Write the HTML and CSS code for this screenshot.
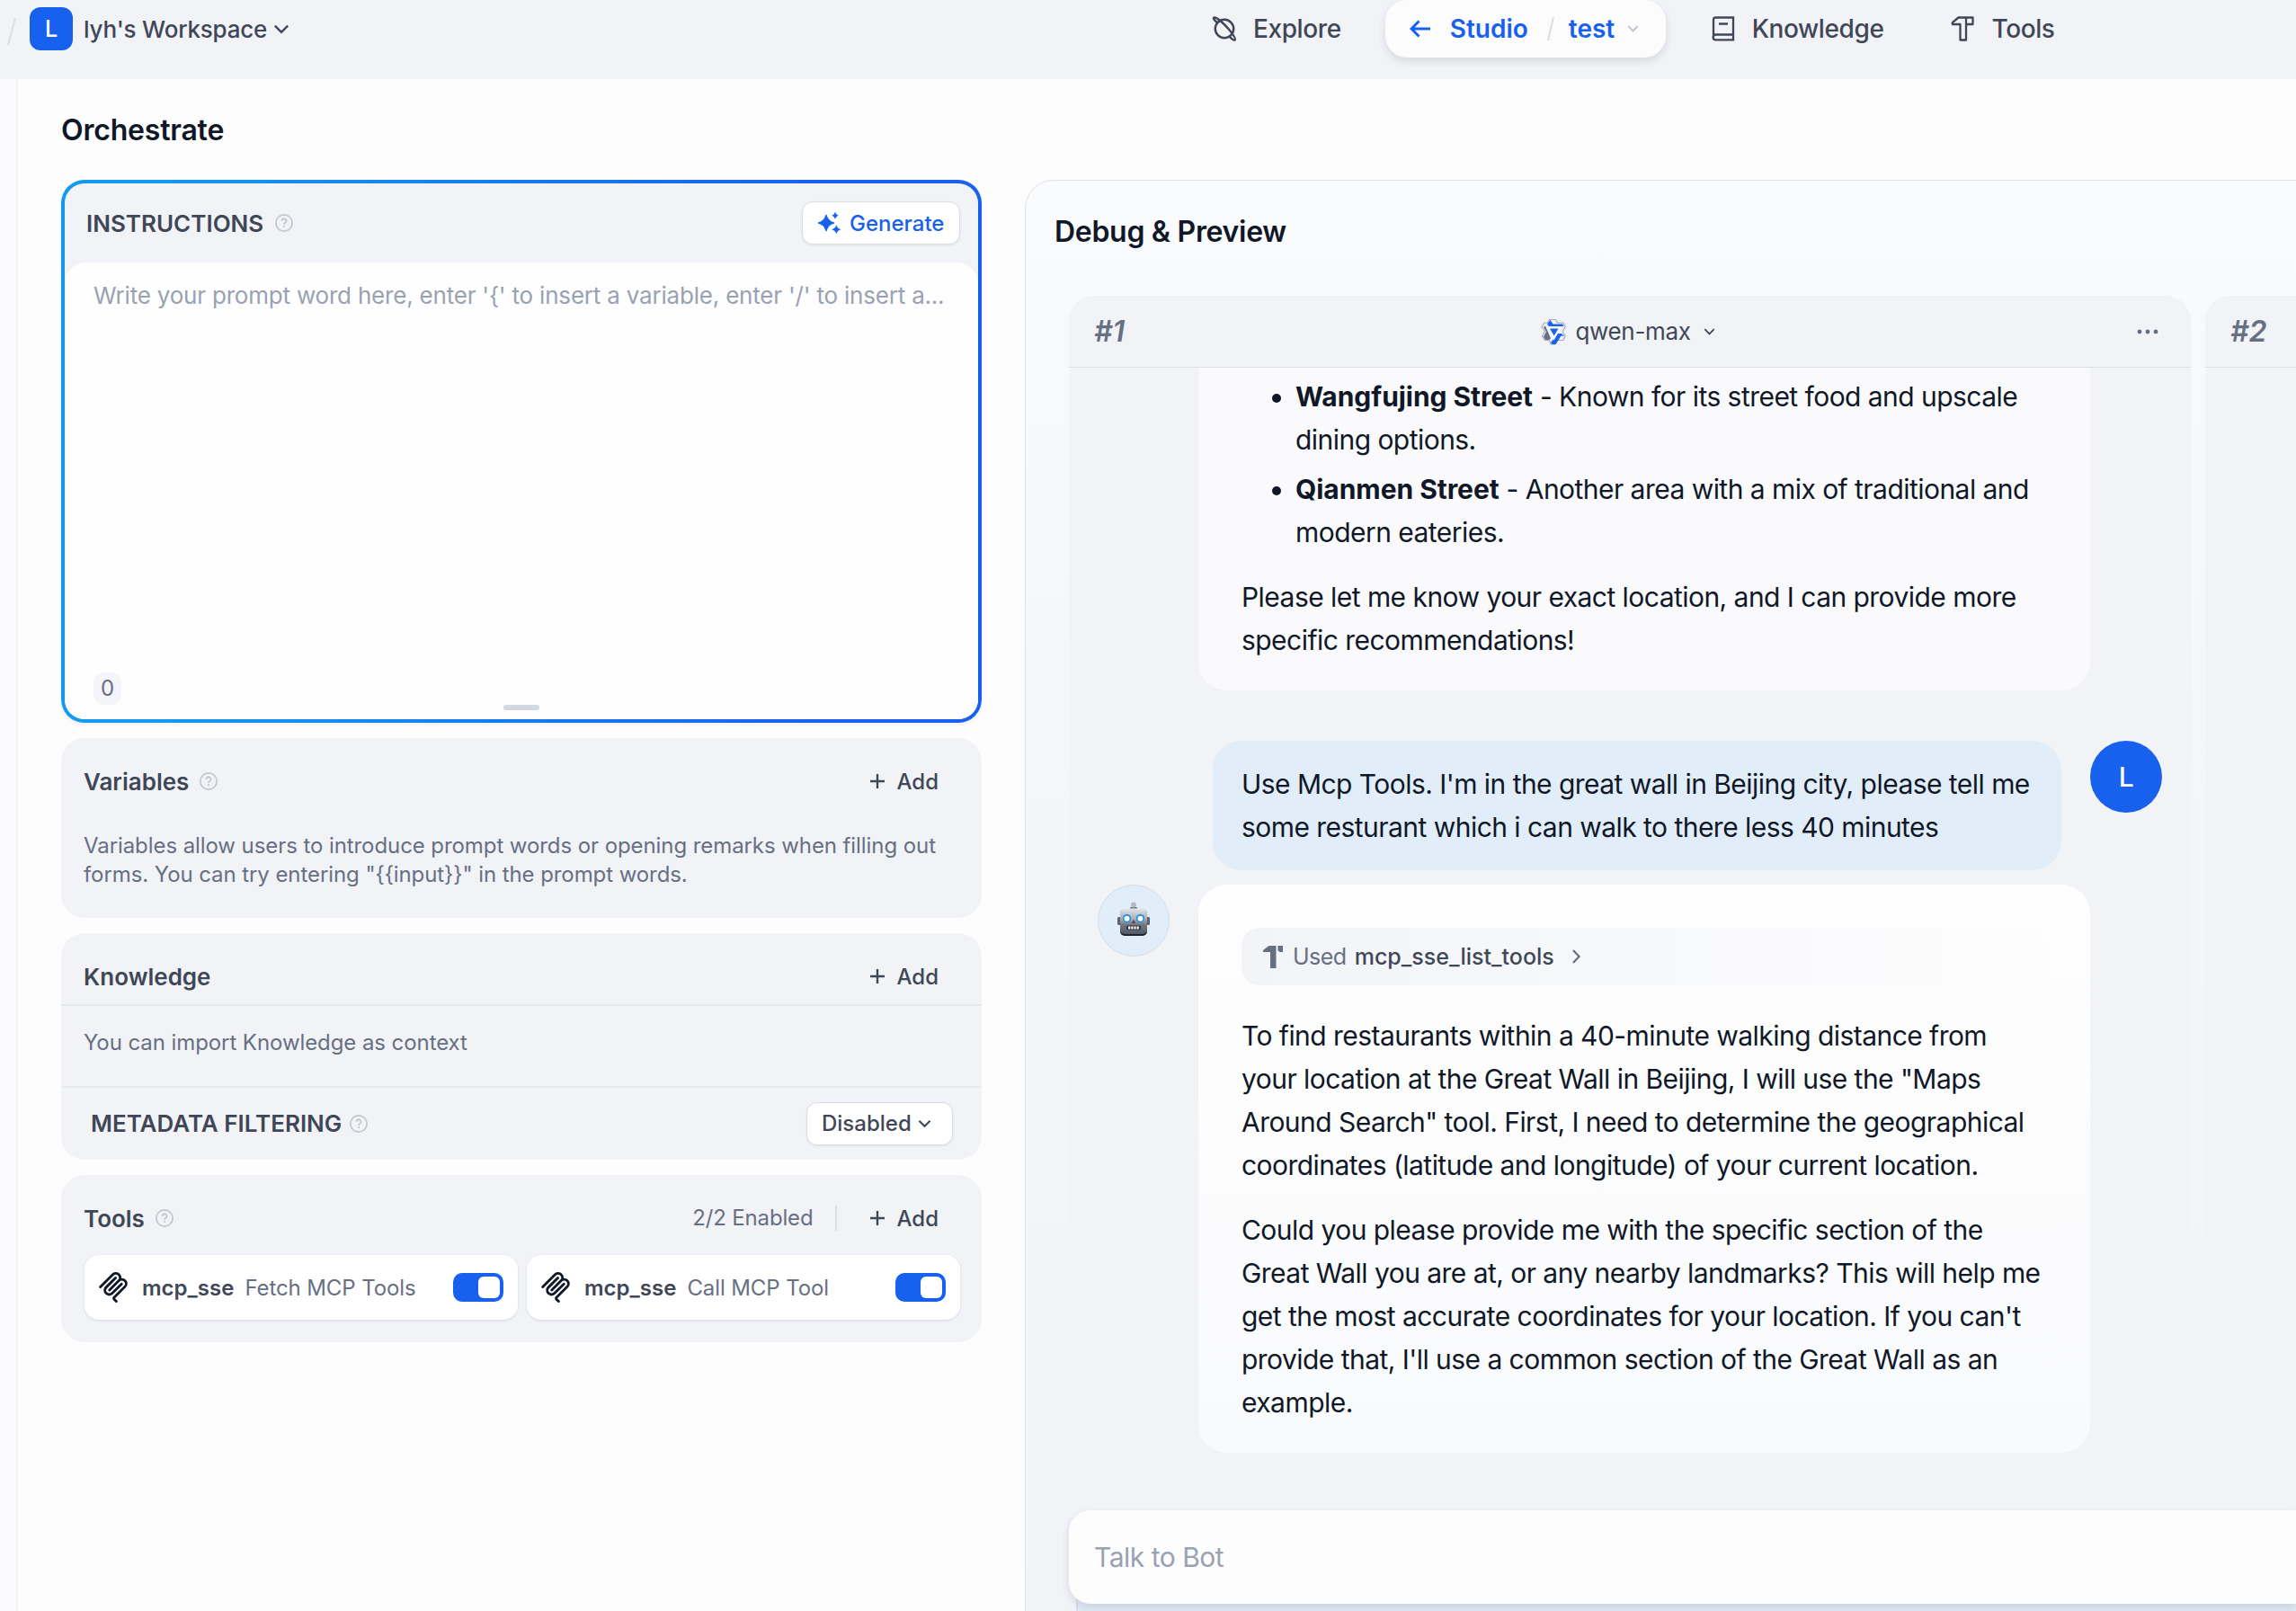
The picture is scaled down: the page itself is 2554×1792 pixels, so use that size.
FILE: index.html
```html
<!DOCTYPE html>
<html lang="en">
<head>
    <meta charset="UTF-8">
    <meta name="viewport" content="width=device-width, initial-scale=1.0">
    <title>Orchestrate</title>
    <link rel="stylesheet" href="styles.css">
</head>
<body>
    <!-- shared icons -->
    <svg class="sprite" width="0" height="0">
        <symbol id="help" viewBox="0 0 24 24">
            <circle cx="12" cy="12" r="11" fill="none" stroke="currentColor" stroke-width="2"/>
            <path d="M9 9.4a3 3 0 1 1 4.300 2.700c-.9.45-1.300.9-1.300 1.900" fill="none" stroke="currentColor" stroke-width="2"/>
            <rect x="10.900" y="15.500" width="2.200" height="2.200" fill="currentColor"/>
        </symbol>
        <symbol id="chevron" viewBox="0 0 16 10">
            <path d="M1.500 1.500L8 8l6.500-6.500" fill="none" stroke="currentColor" stroke-width="2.200"/>
        </symbol>
        <symbol id="plus" viewBox="0 0 16 16">
            <path d="M8 0v16M0 8h16" stroke="currentColor" stroke-width="2.400"/>
        </symbol>
        <symbol id="mcp" viewBox="2.500 2 19 20">
            <path d="M3.500 11.750L11.672 3.579C12.776 2.474 14.567 2.474 15.672 3.579C16.776 4.683 16.776 6.474 15.672 7.579M15.672 7.579L9.500 13.750M15.672 7.579C16.776 6.474 18.567 6.474 19.672 7.579C20.776 8.683 20.776 10.474 19.672 11.579L12.707 18.543C12.317 18.934 12.317 19.567 12.707 19.957L14 21.250" fill="none" stroke="currentColor" stroke-width="1.700" stroke-linecap="round"/>
            <path d="M17.500 9.749L11.328 15.921C10.224 17.026 8.433 17.026 7.328 15.921C6.224 14.816 6.224 13.026 7.328 11.921L13.500 5.749" fill="none" stroke="currentColor" stroke-width="1.700" stroke-linecap="round"/>
        </symbol>
    </svg>

    <header class="header">
        <div class="workspace">
            <svg class="slash" viewBox="0 0 10 30"><path d="M9 0L1 30" stroke="#d9dde4" stroke-width="2"/></svg>
            <div class="ws-logo">L</div>
            <span class="ws-name">lyh's Workspace</span>
            <svg class="ws-arrow"><use href="#chevron"/></svg>
        </div>
        <nav class="nav">
            <a class="nav-item explore">
                <svg class="nav-icon" viewBox="0 0 26 26" fill="none" stroke="currentColor" stroke-width="2.300">
                    <circle cx="13" cy="13" r="9.500"/>
                    <path d="M5.500 6.500C2 3.500 1 2 2.500 1.400C5 1 12 7 17.500 13.500C22 19 25 23.500 23.800 24.500C22.800 25.200 20.500 23.500 18 21"/>
                </svg>
                <span>Explore</span>
            </a>
            <div class="nav-active">
                <svg class="nav-back" viewBox="0 0 24 20"><path d="M23 10H2M10.500 1.500L2 10l8.500 8.500" fill="none" stroke="currentColor" stroke-width="3"/></svg>
                <span class="studio">Studio</span>
                <svg class="nav-slash" viewBox="0 0 8 26"><path d="M7 0L1 26" stroke="#d9dde4" stroke-width="2"/></svg>
                <span class="app-name">test</span>
                <svg class="nav-arrow"><use href="#chevron"/></svg>
            </div>
            <a class="nav-item knowledge">
                <svg class="nav-icon" viewBox="0 0 26 28" fill="none" stroke="currentColor" stroke-width="2.300">
                    <path d="M24 20.500H4.500a2.900 2.900 0 0 0 0 5.800H24V1.500H4.500A2.500 2.500 0 0 0 2 4v19.500M8 8.500h10"/>
                </svg>
                <span>Knowledge</span>
            </a>
            <a class="nav-item tools">
                <svg class="nav-icon" viewBox="0 0 26 28" fill="none" stroke="currentColor" stroke-width="2.300" stroke-linejoin="round">
                    <path d="M8.500 1.500H24.500V9H17V26.500H10.500V9H1.800V7.200zM17 1.500V9"/>
                </svg>
                <span>Tools</span>
            </a>
        </nav>
    </header>

    <div class="main">
        <div class="side-strip"></div>
        <section class="config">
            <h1 class="page-title">Orchestrate</h1>

            <div class="prompt">
                <div class="prompt-inner">
                    <div class="prompt-head">
                        <b>INSTRUCTIONS</b>
                        <svg class="help"><use href="#help"/></svg>
                        <button type="button" class="btn generate">
                            <svg class="sparkle" viewBox="0 0 26 26" fill="currentColor">
                                <path d="M9 4.500Q10.500 11.500 17.500 13Q10.500 14.500 9 21.500Q7.500 14.500 .5 13Q7.500 11.500 9 4.500z" stroke="currentColor" stroke-width="1.500" stroke-linejoin="round"/>
                                <path d="M19 .5Q19.800 4 23 4.800Q19.800 5.600 19 9Q18.200 5.600 15 4.800Q18.200 4 19 .5z"/>
                                <path d="M20.300 15Q21.300 19.200 25.500 20.200Q21.300 21.200 20.300 25.500Q19.300 21.200 15 20.200Q19.300 19.200 20.300 15z"/>
                            </svg>
                            <span>Generate</span>
                        </button>
                    </div>
                    <div class="prompt-body">
                        <div class="placeholder">Write your prompt word here, enter '{' to insert a variable, enter '/' to insert a...</div>
                        <div class="count">0</div>
                        <div class="handle"></div>
                    </div>
                </div>
            </div>

            <div class="card variables">
                <div class="card-head">
                    <b>Variables</b>
                    <svg class="help"><use href="#help"/></svg>
                    <span class="add"><svg><use href="#plus"/></svg>Add</span>
                </div>
                <p class="desc">Variables allow users to introduce prompt words or opening remarks when filling out<br>forms. You can try entering "{{input}}" in the prompt words.</p>
            </div>

            <div class="card knowledge-card">
                <div class="card-head">
                    <b>Knowledge</b>
                    <span class="add"><svg><use href="#plus"/></svg>Add</span>
                </div>
                <p class="desc">You can import Knowledge as context</p>
                <div class="metadata">
                    <b>METADATA FILTERING</b>
                    <svg class="help"><use href="#help"/></svg>
                    <button type="button" class="btn disabled">Disabled<svg><use href="#chevron"/></svg></button>
                </div>
            </div>

            <div class="card tools-card">
                <div class="card-head">
                    <b>Tools</b>
                    <svg class="help"><use href="#help"/></svg>
                    <span class="enabled">2/2 Enabled</span>
                    <span class="add"><svg><use href="#plus"/></svg>Add</span>
                </div>
                <div class="tool-list">
                    <div class="tool">
                        <svg class="mcp"><use href="#mcp"/></svg>
                        <b>mcp_sse</b>
                        <span class="tool-name">Fetch MCP Tools</span>
                        <i class="toggle"></i>
                    </div>
                    <div class="tool">
                        <svg class="mcp"><use href="#mcp"/></svg>
                        <b>mcp_sse</b>
                        <span class="tool-name">Call MCP Tool</span>
                        <i class="toggle"></i>
                    </div>
                </div>
            </div>
        </section>

        <section class="debug">
            <h2 class="debug-title">Debug &amp; Preview</h2>
            <div class="columns">
                <div class="column">
                    <div class="col-head">
                        <i class="num">#1</i>
                        <div class="model">
                            <svg class="qwen" viewBox="0 0 28 30">
                                <path d="M9.500 1.500h7l2 3.500h6.500l2.200 4.500-3 5.500 3 5-2.500 4.500h-5.500l-3.500 4.500h-4.500l-2-4.500H4.500L1.500 20l3-5.500L1 9.500 4 5h3.500z" fill="#eef1f8" stroke="#a3aab8" stroke-width="1.200"/>
                                <path d="M10.500 2l3 4.500h10.500l1.500 2.500H9L7 6.500z" fill="#1c61ec"/>
                                <path d="M26 20l-3.500-.500L16.500 29H12.500l-1.500-2L19 17h4z" fill="#1c61ec"/>
                                <path d="M3 20.500L6 15 3 10l2-1.500 6 14-2 1.500H5z" fill="#667085"/>
                                <path d="M6 9h17.500L14.500 24.500z" fill="#f7f9fd"/>
                                <path d="M10 11.500h9.500L14.700 19.500z" fill="#1c61ec"/>
                            </svg>
                            <span>qwen-max</span>
                            <svg class="model-arrow"><use href="#chevron"/></svg>
                        </div>
                        <svg class="dots" viewBox="0 0 24 6" fill="#676f83"><circle cx="3" cy="3" r="2.400"/><circle cx="12" cy="3" r="2.400"/><circle cx="21" cy="3" r="2.400"/></svg>
                    </div>
                    <div class="chat">
                        <div class="answer first">
                            <ul>
                                <li><b>Wangfujing Street</b> - Known for its street food and upscale<br>dining options.</li>
                                <li><b>Qianmen Street</b> - Another area with a mix of traditional and<br>modern eateries.</li>
                            </ul>
                            <p>Please let me know your exact location, and I can provide more<br>specific recommendations!</p>
                        </div>
                        <div class="question-row">
                            <div class="question">Use Mcp Tools. I'm in the great wall in Beijing city, please tell me<br>some resturant which i can walk to there less 40 minutes</div>
                            <div class="avatar user">L</div>
                        </div>
                        <div class="answer-row">
                            <div class="avatar bot">
                                <svg class="robot" viewBox="0 0 36 38">
                                    <defs>
                                        <linearGradient id="metal" x1="0" y1="0" x2="0" y2="1">
                                            <stop offset="0" stop-color="#e4e6ea"/>
                                            <stop offset=".4" stop-color="#a9adb6"/>
                                            <stop offset=".65" stop-color="#70757f"/>
                                            <stop offset="1" stop-color="#555a66"/>
                                        </linearGradient>
                                    </defs>
                                    <rect x="14" y="6" width="8" height="3" rx="1" fill="#6f7480"/>
                                    <circle cx="18" cy="3.500" r="3" fill="#b4b8c0"/>
                                    <rect x="0" y="17" width="4" height="9" rx="1.500" fill="#5d6270"/>
                                    <rect x="32" y="17" width="4" height="9" rx="1.500" fill="#5d6270"/>
                                    <rect x="3" y="8" width="30" height="30" rx="5" fill="#1f2430"/>
                                    <rect x="3" y="7.500" width="30" height="28.500" rx="5" fill="url(#metal)"/>
                                    <circle cx="10.500" cy="18.500" r="4.600" fill="#1c8fea"/>
                                    <circle cx="25.500" cy="18.500" r="4.600" fill="#1c8fea"/>
                                    <circle cx="10.500" cy="18.800" r="3" fill="#fff"/>
                                    <circle cx="25.500" cy="18.800" r="3" fill="#fff"/>
                                    <path d="M18 20l2.500 4h-5z" fill="#474c59"/>
                                    <rect x="10" y="26.500" width="16" height="5" rx="1.500" fill="#333845"/>
                                    <path d="M12 29h12" stroke="#fff" stroke-width="3" stroke-dasharray="2.200 1"/>
                                </svg>
                            </div>
                            <div class="answer">
                                <div class="used-tool">
                                    <svg class="hammer" viewBox="0 0 22 25" fill="#676f83"><path d="M6.500 0H14.500V25H8V7H0V5z"/><path d="M16.500 0h5.500v7h-3l-2.500-1.500z"/></svg>
                                    <span class="used">Used</span>
                                    <span class="used-name">mcp_sse_list_tools</span>
                                    <svg class="right" viewBox="0 0 9 16"><path d="M1 1l6.500 7L1 15" fill="none" stroke="#676f83" stroke-width="2.200"/></svg>
                                </div>
                                <p>To find restaurants within a 40-minute walking distance from<br>your location at the Great Wall in Beijing, I will use the "Maps<br>Around Search" tool. First, I need to determine the geographical<br>coordinates (latitude and longitude) of your current location.</p>
                                <p>Could you please provide me with the specific section of the<br>Great Wall you are at, or any nearby landmarks? This will help me<br>get the most accurate coordinates for your location. If you can't<br>provide that, I'll use a common section of the Great Wall as an<br>example.</p>
                            </div>
                        </div>
                    </div>
                </div>
                <div class="column next">
                    <div class="col-head">
                        <i class="num">#2</i>
                    </div>
                </div>
            </div>
            <div class="talk">
                <div class="talk-input">Talk to Bot</div>
                <div class="talk-foot"></div>
            </div>
        </section>
    </div>
</body>
</html>
```
FILE: styles.css
```css
*{
    box-sizing: border-box;
}
body{
    margin: 0;
    width: 2554px;
    height: 1792px;
    overflow: hidden;
    background-color: #fdfdfe;
    font-family: Inter, "Liberation Sans", sans-serif;
    color: #101828;
}
body *{
    white-space: nowrap;
}
svg{
    display: block;
    flex: none;
}
h1, h2, p, ul{
    margin: 0;
    padding: 0;
}
.sprite{
    position: absolute;
}

/* header */
.header{
    display: flex;
    height: 88px;
    background-color: #f1f3f7;
    color: #3f4757;
    font-size: 28px;
    font-weight: 500;
}
.workspace{
    display: flex;
    align-items: center;
    width: 1348px;
    height: 64px;
    padding-left: 8px;
}
.slash{
    width: 10px;
    height: 30px;
    margin-top: 6px;
}
.ws-logo{
    width: 48px;
    height: 48px;
    margin-left: 15px;
    border-radius: 12px;
    background-color: #1860ee;
    color: white;
    font-size: 25px;
    line-height: 48px;
    text-align: center;
}
.ws-name{
    margin-left: 12px;
    font-size: 26px;
    letter-spacing: -0.2px;
}
.ws-arrow{
    width: 18px;
    height: 11px;
    margin-left: 7px;
}
.nav{
    display: flex;
    height: 64px;
}
.nav-item{
    display: flex;
    align-items: center;
    letter-spacing: -0.4px;
}
.nav-icon{
    width: 28px;
    height: 28px;
    margin-right: 18px;
}
.nav-active{
    display: flex;
    align-items: center;
    width: 312px;
    margin: 0 50px 0 49px;
    padding-left: 27px;
    border-radius: 24px;
    background-color: #fcfcfd;
    box-shadow: 0 4px 10px rgba(16,24,40,0.12);
    color: #1860ee;
    font-weight: 600;
}
.nav-back{
    width: 24px;
    height: 20px;
    margin-right: 21px;
}
.nav-slash{
    width: 8px;
    height: 26px;
    margin: 0 16px 0 21px;
}
.nav-arrow{
    width: 13px;
    height: 8px;
    margin-left: 14px;
    color: #b9c0cc;
}
.tools{
    margin-left: 74px;
}

/* layout */
.main{
    display: flex;
    height: 1704px;
}
.side-strip{
    flex: none;
    width: 20px;
    border-right: 2px solid #f1f3f7;
    background-color: #fbfbfd;
}
.config{
    flex: none;
    width: 1120px;
    padding: 34px 48px 0 48px;
}
.page-title, .debug-title{
    font-size: 32px;
    font-weight: 600;
    line-height: 46px;
    letter-spacing: -0.2px;
}
.help{
    width: 20px;
    height: 20px;
    color: #c0c5d0;
}

/* prompt editor */
.prompt{
    height: 604px;
    margin-top: 32px;
    padding: 4px;
    border-radius: 26px;
    background: linear-gradient(90deg, #1599ee 10%, #1860ee 85%);
    box-shadow: 0 2px 4px rgba(16,24,40,0.06);
}
.prompt-inner{
    height: 100%;
    border-radius: 22px;
    background-color: #f1f3f7;
}
.prompt-head{
    display: flex;
    align-items: center;
    height: 88px;
    padding: 0 20px 0 24px;
    color: #3f4757;
}
.prompt-head b, .card b{
    font-size: 26px;
    font-weight: 600;
}
.prompt-head .help{
    margin-left: 13px;
}
.btn{
    display: flex;
    align-items: center;
    height: 48px;
    margin-left: auto;
    border: 1px solid #d9dde5;
    border-radius: 12px;
    background-color: white;
    box-shadow: 0 1px 3px rgba(16,24,40,0.08);
    font-family: inherit;
    font-size: 24px;
    font-weight: 500;
}
.generate{
    width: 176px;
    padding: 0 0 0 17px;
    color: #1860ee;
}
.sparkle{
    width: 26px;
    height: 26px;
    margin-right: 9px;
}
.prompt-body{
    position: relative;
    height: 508px;
    padding: 21px 32px;
    border-radius: 24px 24px 22px 22px;
    background-color: #fefefe;
}
.placeholder{
    font-size: 26px;
    line-height: 32px;
    letter-spacing: -0.2px;
    color: #98a2b2;
}
.count{
    position: absolute;
    left: 32px;
    bottom: 16px;
    width: 31px;
    height: 36px;
    border-radius: 12px;
    background-color: #f4f5f8;
    color: #676f83;
    font-size: 24px;
    line-height: 36px;
    text-align: center;
}
.handle{
    position: absolute;
    left: 488px;
    bottom: 10px;
    width: 40px;
    height: 6px;
    border-radius: 3px;
    background-color: #d3d7de;
}

/* cards */
.card{
    margin-top: 17px;
    border-radius: 26px;
    background-color: #f1f3f7;
    color: #3f4757;
}
.card-head{
    display: flex;
    align-items: center;
    padding: 0 48px 0 25px;
}
.card-head .help{
    margin-left: 12px;
}
.add{
    display: flex;
    align-items: center;
    margin-left: auto;
    font-size: 24px;
    font-weight: 500;
}
.add svg{
    width: 16px;
    height: 16px;
    margin-right: 14px;
}
.desc{
    padding-left: 25px;
    color: #676f83;
    font-size: 24px;
    line-height: 32px;
    letter-spacing: -0.08px;
}
.variables{
    height: 200px;
}
.variables .card-head{
    height: 96px;
}
.variables .desc{
    padding-top: 8px;
}
.knowledge-card{
    height: 252px;
}
.knowledge-card .card-head{
    height: 81px;
    padding-top: 17px;
    border-bottom: 2px solid #e6e9ee;
}
.knowledge-card .desc{
    height: 89px;
    padding-top: 25px;
}
.metadata{
    display: flex;
    align-items: center;
    height: 81px;
    padding: 0 32px 0 33px;
    border-top: 2px solid #e6e9ee;
}
.metadata .help{
    margin-left: 9px;
}
.disabled{
    width: 163px;
    padding: 0 0 0 16px;
    color: #3f4757;
}
.disabled svg{
    width: 15px;
    height: 10px;
    margin-left: 7px;
}
.tools-card{
    height: 186px;
}
.tools-card .card-head{
    height: 89px;
    padding-top: 7px;
}
.enabled{
    margin-left: auto;
    padding-right: 24px;
    border-right: 2px solid #dcdfe6;
    color: #676f83;
    font-size: 24px;
    line-height: 28px;
    letter-spacing: -0.15px;
}
.tools-card .add{
    margin-left: 37px;
}
.tool-list{
    display: flex;
    gap: 10px;
    padding: 0 24px 0 26px;
}
.tool{
    display: flex;
    flex: 1;
    align-items: center;
    height: 72px;
    padding: 0 16px;
    border-radius: 16px;
    background-color: white;
    box-shadow: 0 1px 3px rgba(16,24,40,0.12);
}
.mcp{
    width: 32px;
    height: 34px;
    color: #101828;
}
.tool b{
    margin-left: 16px;
    font-size: 24px;
}
.tool-name{
    margin-left: 12px;
    color: #676f83;
    font-size: 24px;
    letter-spacing: -0.1px;
}
.toggle{
    width: 56px;
    height: 32px;
    margin-left: auto;
    padding: 4px 4px 4px 28px;
    border-radius: 10px;
    background-color: #1860ee;
}
.toggle::after{
    content: "";
    display: block;
    width: 24px;
    height: 24px;
    border-radius: 6px;
    background-color: white;
}

/* debug panel */
.debug{
    flex: none;
    width: 1414px;
    height: 1592px;
    margin-top: 112px;
    padding: 34px 0 0 48px;
    border: 1px solid #dfe3e9;
    border-width: 1px 0 0 1px;
    border-radius: 32px 0 0 0;
    background: linear-gradient(180deg, #fafbfc 0%, #f5f6f9 40%, #f1f3f7 100%);
    overflow: hidden;
}
.debug-title{
    margin-left: -16px;
    letter-spacing: -0.3px;
}
.columns{
    display: flex;
    gap: 16px;
    margin-top: 48px;
}
.column{
    flex: none;
    width: 1248px;
    height: 1328px;
    border-radius: 28px;
    background-color: #f1f3f7;
}
.next{
    flex: 1;
    width: auto;
    border-radius: 28px 0 0 28px;
}
.col-head{
    display: flex;
    align-items: center;
    height: 80px;
    padding: 0 36px 0 28px;
    border-bottom: 1px solid #dcdfe6;
    color: #676f83;
}
.num{
    font-size: 32px;
    font-weight: 600;
}
.model{
    display: flex;
    align-items: center;
    color: #3f4757;
    font-size: 26px;
    letter-spacing: -0.3px;
}
.col-head .model{
    margin: 0 auto;
    padding-right: 6px;
}
.qwen{
    width: 28px;
    height: 30px;
    margin-right: 10px;
}
.model-arrow{
    width: 13px;
    height: 8px;
    margin-left: 14px;
}
.dots{
    width: 24px;
    height: 6px;
}
.chat{
    font-size: 30px;
    line-height: 48px;
    letter-spacing: -0.54px;
}
.answer{
    width: 992px;
    padding: 48px 48px 32px 48px;
    border-radius: 32px;
    background: linear-gradient(180deg, #fefefe, #f9fafc);
}
.answer p + p{
    margin-top: 24px;
}
.first{
    height: 359px;
    margin-left: 144px;
    padding-top: 8px;
    border-radius: 0 0 32px 32px;
    background: #fafafc;
}
.first ul{
    padding-left: 60px;
}
.first li{
    margin-bottom: 7px;
}
.first b{
    font-weight: 700;
    letter-spacing: -0.05px;
}
.first p{
    margin-top: 24px;
}
.question-row{
    display: flex;
    margin: 56px 0 16px 160px;
}
.question{
    width: 944px;
    height: 144px;
    padding: 24px 32px;
    border-radius: 32px;
    background-color: #e1edf9;
}
.avatar{
    display: flex;
    flex: none;
    align-items: center;
    justify-content: center;
    width: 80px;
    height: 80px;
    border-radius: 50%;
}
.user{
    margin-left: 32px;
    background-color: #1860ee;
    color: white;
    font-weight: 500;
}
.answer-row{
    display: flex;
    padding-left: 32px;
}
.bot{
    margin-right: 32px;
    border: 1px solid #d5dde6;
    background-color: #e1edf9;
}
.robot{
    width: 36px;
    height: 38px;
    margin-bottom: 4px;
}
.used-tool{
    display: flex;
    align-items: center;
    height: 64px;
    margin-bottom: 32px;
    padding-left: 24px;
    border-radius: 20px;
    background: linear-gradient(90deg, #f2f4f7, #fdfdfe);
    font-size: 25px;
    letter-spacing: 0;
}
.hammer{
    width: 22px;
    height: 25px;
    margin-right: 11px;
}
.used{
    color: #676f83;
    letter-spacing: -0.5px;
}
.used-name{
    margin: 0 20px 0 9px;
    color: #3f4757;
    font-weight: 500;
}
.right{
    width: 9px;
    height: 16px;
}
.talk{
    margin-top: 23px;
}
.talk-input{
    position: relative;
    height: 104px;
    padding-left: 28px;
    border-radius: 24px 0 0 24px;
    background-color: #fdfdfe;
    box-shadow: 0 4px 10px rgba(16,24,40,0.12);
    color: #98a2b2;
    font-size: 30px;
    line-height: 104px;
    letter-spacing: -0.5px;
}
.talk-foot{
    height: 32px;
    margin: -24px 0 0 8px;
    border-left: 2px solid #d9dde5;
    background-color: #e1ebf6;
}
```
